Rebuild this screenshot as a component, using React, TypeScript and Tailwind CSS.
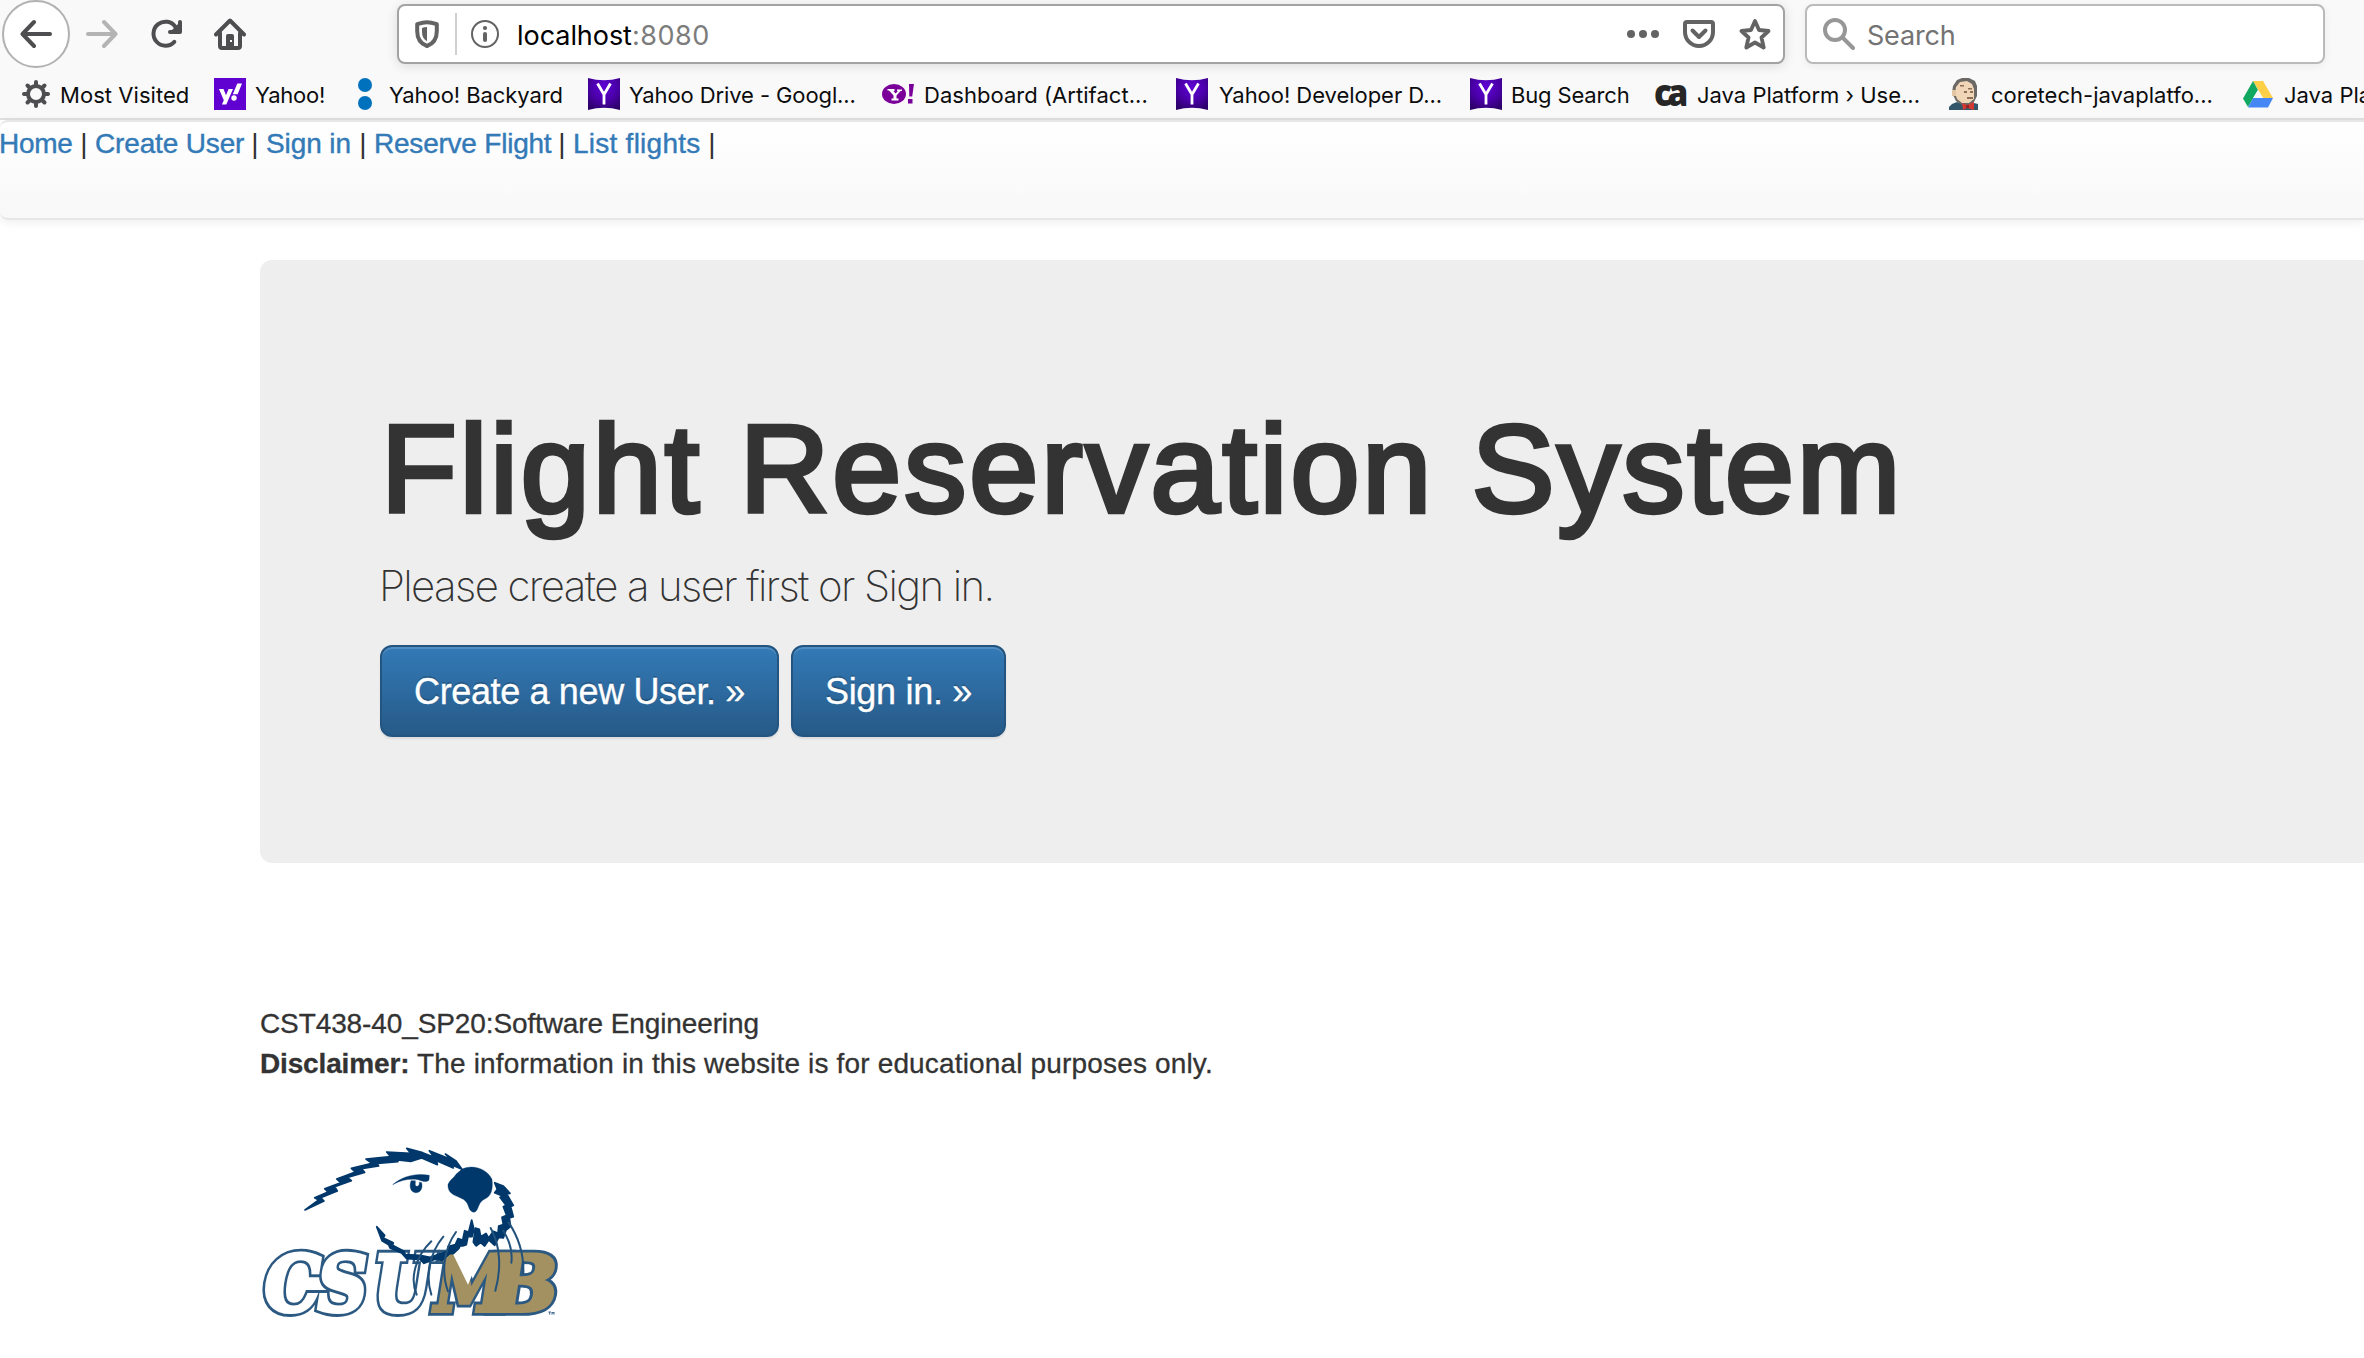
import React from "react";

/* ---------- toolbar icons ---------- */

function BackArrow() {
  return (
    <svg className="size-8" viewBox="0 0 32 32" fill="none" stroke="#4e4e50" strokeWidth="4" strokeLinecap="round" strokeLinejoin="round">
      <path d="M14 4 2.5 16 14 28M3 16h27" />
    </svg>
  );
}

function ForwardArrow() {
  return (
    <svg className="size-8" viewBox="0 0 32 32" fill="none" stroke="#b4b4b5" strokeWidth="4" strokeLinecap="round" strokeLinejoin="round">
      <path d="M18 4 29.5 16 18 28M29 16H2" />
    </svg>
  );
}

function Reload() {
  return (
    <svg className="size-8" viewBox="0 0 32 32" fill="none" stroke="#4e4e50" strokeWidth="4" strokeLinecap="round" strokeLinejoin="round">
      <path d="M24.3 23.8A12 12 0 1 1 25.6 9.2" />
      <path d="M30 4v10H20z" fill="#4e4e50" strokeWidth="0" />
      <path d="M30 4v10H20" />
    </svg>
  );
}

function Home() {
  return (
    <svg className="size-8" viewBox="0 0 32 32" fill="none" stroke="#4e4e50" strokeWidth="4" strokeLinecap="round" strokeLinejoin="round">
      <path d="M2 16.5 16 2.5l14 14" />
      <path d="M6 15v13a2 2 0 0 0 2 2h16a2 2 0 0 0 2-2V15" />
      <path d="M12 30V18a2 2 0 0 1 2-2h4a2 2 0 0 1 2 2v12z" fill="#4e4e50" stroke="none" />
      <rect x="16" y="22" width="2" height="2" fill="#f9f9fa" stroke="none" />
    </svg>
  );
}

function Shield() {
  return (
    <svg className="h-7 w-6" viewBox="0 0 24 28" fill="none">
      <path d="M12 2.2c3.200 0 6.200.8 9.800 2v7c0 8-3.500 12.500-9.800 14.800C5.700 23.700 2.200 19.200 2.200 11.200v-7c3.600-1.200 6.600-2 9.800-2z" stroke="#636364" strokeWidth="4" strokeLinejoin="round" />
      <path d="M12 7c-1.900 0-3.300.3-5 .9v4.100c0 4.400 1.500 7.200 5 9.300z" fill="#636364" />
    </svg>
  );
}

function Info() {
  return (
    <svg className="size-7" viewBox="0 0 28 28" fill="none">
      <circle cx="14" cy="14" r="13" stroke="#636364" strokeWidth="2" />
      <circle cx="14" cy="8" r="2.100" fill="#636364" />
      <rect x="12" y="12" width="4" height="10" rx="2" fill="#636364" />
    </svg>
  );
}

function Dots() {
  return (
    <svg className="size-8" viewBox="0 0 32 32" fill="#636364">
      <circle cx="4" cy="16" r="4" />
      <circle cx="16" cy="16" r="4" />
      <circle cx="28" cy="16" r="4" />
    </svg>
  );
}

function Pocket() {
  return (
    <svg className="size-8" viewBox="0 0 32 32" fill="none" stroke="#636364" strokeWidth="4" strokeLinecap="round" strokeLinejoin="round">
      <path d="M4 4h24a2 2 0 0 1 2 2v8a14 14 0 0 1-28 0V6a2 2 0 0 1 2-2z" />
      <path d="m9.500 12.500 6.500 6.500 6.500-6.500" />
    </svg>
  );
}

function Star() {
  return (
    <svg className="size-8" viewBox="0 0 32 32" fill="none" stroke="#636364" strokeWidth="3.800" strokeLinejoin="round">
      <path d="m16 3 4 9 9.500 1-7 6.500 2.200 10L16 24.500 7.300 29.500l2.200-10-7-6.500 9.500-1z" />
    </svg>
  );
}

function Magnifier() {
  return (
    <svg className="size-8" viewBox="0 0 32 32" fill="none" stroke="#979798" strokeWidth="4" strokeLinecap="round">
      <circle cx="12" cy="12" r="10" />
      <path d="m19.500 19.500 10.500 10.500" />
    </svg>
  );
}

/* ---------- bookmark favicons ---------- */

function Gear() {
  return (
    <svg className="size-7" viewBox="0 0 28 28" fill="none" stroke="#4e4e50" strokeLinecap="round">
      <circle cx="14" cy="14" r="8" strokeWidth="4" />
      <path strokeWidth="4" d="M14 2v3M14 23v3M2 14h3M23 14h3M5.500 5.500l2 2M20.500 20.500l2 2M5.500 22.500l2-2M20.500 7.500l2-2" />
    </svg>
  );
}

function YahooSquare() {
  return (
    <svg className="size-8" viewBox="0 0 32 32">
      <rect width="32" height="32" fill="#6001d2" />
      <path d="M5 11h4.500l2.500 6.300 2.600-6.300H19l-6.700 15.500H7.900l1.900-4.300z" fill="#fff" />
      <path d="M23.300 5.500H28L23.600 16.300h-4.800z" fill="#fff" />
      <circle cx="20" cy="20" r="2.700" fill="#fff" />
    </svg>
  );
}

function BlueDots() {
  return (
    <svg className="size-8" viewBox="0 0 32 32" fill="#0071bc">
      <circle cx="17" cy="7" r="7" />
      <circle cx="17" cy="25" r="7" />
    </svg>
  );
}

function PurpleY() {
  return (
    <svg className="size-8" viewBox="0 0 32 32">
      <defs>
        <radialGradient id="purple" cx="0.5" cy="0.3" r="0.75">
          <stop offset="0" stopColor="#5f02d6" />
          <stop offset="0.55" stopColor="#4a00a8" />
          <stop offset="1" stopColor="#2c0068" />
        </radialGradient>
      </defs>
      <path d="M0 0q16 4.500 32 0v32q-16-4.500-32 0z" fill="url(#purple)" />
      <path d="m9.500 5.500 6.500 11 6.500-11M16 16v10.500" fill="none" stroke="#fff" strokeWidth="2.800" />
    </svg>
  );
}

function YahooBang() {
  return (
    <svg className="size-8" viewBox="0 0 32 32">
      <ellipse cx="12" cy="16" rx="12" ry="10" fill="#7b0099" />
      <path d="M5.500 11h7v2h-1l2 2.500 2.500-2.500h-1v-1.500h5v1.500h-1.500l-4 4.500v3h2v2h-7v-2h2v-3l-4.500-5H5.500z" fill="#fff" />
      <path d="M27 6h5l-1.800 12.500H27.300z" fill="#7b0099" />
      <rect x="26" y="21" width="4.500" height="4.500" fill="#7b0099" />
    </svg>
  );
}

function CaLogo() {
  return (
    <span className="-mt-1 block w-8 origin-left scale-x-90 font-['Open_Sans'] text-[37px] leading-8 font-extrabold tracking-[-5px] text-[#262626]">
      ca
    </span>
  );
}

function Butler() {
  return (
    <svg className="size-8" viewBox="0 0 32 32">
      <path d="M1 32v-3l3-3 5-2 8 3 9-2 4 1v6z" fill="#33566b" />
      <path d="M5 8 9 2l5-2h7l6 3 2 5v10l-3 6-4 3h-8l-6-4-4-8z" fill="#6b6866" />
      <path d="M8 9 12 4l7-1 5 3 2 5v10l-5 4h-7l-5-4-2-6z" fill="#f0d6b7" />
      <path d="M4 12h4v6H4z" fill="#e2c5a2" />
      <path d="M12 7h4v1.500h-4zM16 13h3v2h-3zM22 13h3v2h-3zM19 19h6v2h-6zM20 10h4v1.500h-4z" fill="#8d6e58" />
      <path d="m14 25 5 2 7-3v8l-7-2-4 2z" fill="#d33833" />
      <path d="M18 27h3v3h-3z" fill="#8f2623" />
    </svg>
  );
}

function Drive() {
  return (
    <svg className="size-8" viewBox="0 0 32 32">
      <path d="M11 3h10l10 17H21z" fill="#ffcf48" />
      <path d="M11 3 1 20.500 6 29l10-17z" fill="#11a861" />
      <path d="M11 20h20l-5 9.500H6z" fill="#4587f4" />
      <path d="m16 12 5 8H11z" fill="#f9f9fa" />
    </svg>
  );
}

/* ---------- campus logo ---------- */

const letters = [
  { ch: "C", x: 60, sx: 0.92, fill: "#ffffff" },
  { ch: "S", x: 219, sx: 0.9, fill: "#ffffff" },
  { ch: "U", x: 388, sx: 0.86, fill: "#ffffff" },
  { ch: "M", x: 570, sx: 0.88, fill: "#a39161" },
  { ch: "B", x: 736, sx: 1.05, fill: "#a39161" },
];

function OtterLogo() {
  return (
    <svg className="h-[174px] w-[300px] overflow-visible" viewBox="60 50 900 522">
      {/* outline pass, then fill pass, so that M and B join */}
      <g fontFamily="DejaVu Serif" fontWeight="700" fontSize="232" strokeWidth="29" stroke="#2b5982" fill="#2b5982" aria-hidden="true">
        {letters.map((l) => (
          <text key={l.ch} transform={`translate(${l.x} 544) skewX(-9) scale(${l.sx} 1)`}>
            {l.ch}
          </text>
        ))}
      </g>
      <g fontFamily="DejaVu Serif" fontWeight="700" fontSize="232" strokeWidth="12">
        {letters.map((l) => (
          <text key={l.ch} transform={`translate(${l.x} 544) skewX(-9) scale(${l.sx} 1)`} fill={l.fill} stroke={l.fill}>
            {l.ch}
          </text>
        ))}
      </g>
      <g fill="#00386b" stroke="#00386b" strokeWidth="5" strokeLinejoin="round">
        <path d="M195 242 236 212 224 205 264 188 254 178 302 160 290 149 346 128 334 117 396 102 378 89 452 82 440 68 512 72 500 57 548 70 582 84 568 64 632 90 616 74 648 95 666 120 634 106 640 116 590 94 592 106 545 86 512 96 460 90 474 97 412 102 416 110 364 118 374 129 322 144 334 154 284 172 292 185 242 205 252 215z" />
        <path d="M458 166C488 140 530 130 568 138L567 152C560 160 548 156 535 151 508 147 484 152 458 166z" strokeWidth="1" />
        <path d="M513 154C506 175 514 190 528 190 542 190 549 176 545 160L538 158C540 170 530 174 526 168L526 154z" strokeWidth="1" />
        <path d="M665 120C700 103 742 120 756 150 760 182 752 200 738 207 720 216 718 226 712 240 706 253 694 250 688 238 682 220 678 212 660 205 640 197 622 190 624 165 632 150 641 146 648 135z" strokeWidth="1" />
        <path d="M764 160 790 170 810 192 800 194 820 228 812 232 820 262 808 266 812 292 798 302 790 326 776 324 764 348 746 332 734 350 722 340 708 350 700 338 706 296 718 300 722 322 738 312 746 326 760 306 774 312 776 290 790 286 786 264 800 258 790 232 798 228 780 204 788 200 764 190 772 180z" />
        <path d="M410 292 434 318 430 326 460 340 458 348 492 366 496 376 540 378 570 384 622 366 624 352 646 346 654 328 668 332 674 304 686 308 695 272 702 300 696 322 684 322 678 350 660 350 650 374 630 372 606 394 590 388 552 402 540 390 500 388 486 372 450 356 446 346 426 334z" />
      </g>
      <path d="M640 376 662 356 690 344 716 356 726 368 684 466z" fill="#ffffff" />
      <g fill="none" stroke="#23527c" strokeWidth="6" strokeLinecap="round">
        <path d="M574 336C528 380 508 446 530 496" />
        <path d="M610 322C568 372 556 440 574 496" />
        <path d="M648 308C610 360 604 432 624 486" />
        <path d="M752 296C782 350 784 420 766 484" />
        <path d="M790 304C812 340 818 370 814 400" />
        <path d="M806 280C840 330 852 380 850 434" />
      </g>
      <path d="M925 548h8m-4 0v8m7 0v-8l3 4 3-4v8" fill="none" stroke="#23527c" strokeWidth="2.500" />
    </svg>
  );
}

/* ---------- page ---------- */

const bookmarks = [
  { label: "Yahoo!", icon: <YahooSquare />, box: "w-[134px]", text: "tracking-[-0.24px]" },
  { label: "Yahoo! Backyard", icon: <BlueDots />, box: "w-[240px]", text: "tracking-[-0.07px]" },
  { label: "Yahoo Drive - Googl...", icon: <PurpleY />, box: "w-[294px]", text: "tracking-[-0.1px]" },
  { label: "Dashboard (Artifact...", icon: <YahooBang />, box: "w-[294px]", text: "pl-px tracking-[0.04px]" },
  { label: "Yahoo! Developer D...", icon: <PurpleY />, box: "w-[294px]", text: "pl-[2px] tracking-[-0.04px]" },
  { label: "Bug Search", icon: <PurpleY />, box: "w-[184px]", text: "tracking-[-0.15px]" },
  { label: "Java Platform › Use...", icon: <CaLogo />, box: "w-[294px]", text: "pl-[2px] tracking-normal" },
  { label: "coretech-javaplatfo...", icon: <Butler />, box: "w-[294px]", text: "pl-[2px] tracking-[0.02px]" },
  { label: "Java Platform", icon: <Drive />, box: "w-[294px]", text: "pl-px tracking-normal" },
];

const links = [
  { label: "Home", cls: "w-[74px] tracking-[-0.3px] -ml-px" },
  { label: "Create User", cls: "w-[149px] tracking-[-0.15px]" },
  { label: "Sign in", cls: "w-[86px] tracking-[-0.1px]" },
  { label: "Reserve Flight", cls: "w-[177px] tracking-[-0.22px]" },
  { label: "List flights", cls: "w-[128px] tracking-[0.25px]" },
];

function BrowserChrome() {
  return (
    <header className="h-[118px] bg-[#f9f9fa] font-['Inter',sans-serif]">
      <div className="flex h-[68px] items-center pl-[2px]">
        <button className="flex size-[68px] items-center justify-center rounded-full border-2 border-[#b1b1b1] bg-white">
          <BackArrow />
        </button>
        <div className="ml-4"><ForwardArrow /></div>
        <div className="ml-8"><Reload /></div>
        <div className="ml-8"><Home /></div>
        <div className="ml-[151px] flex h-[60px] w-[1388px] items-center rounded-lg border-2 border-[#a3a3a3] bg-white pl-4 pr-3 shadow-[0_2px_12px_rgba(0,0,0,0.12)]">
          <Shield />
          <div className="ml-4 h-[42px] w-[2px] bg-[#d0d0d0]" />
          <div className="ml-[14px]"><Info /></div>
          <div className="ml-[18px] pt-[3px] text-[27px] text-black">
            <span className="tracking-[-0.05px]">localhost</span>
            <span className="tracking-[0.5px] text-[#7c7c7c]">:8080</span>
          </div>
          <div className="ml-auto flex items-center gap-6">
            <Dots />
            <Pocket />
            <Star />
          </div>
        </div>
        <div className="ml-5 flex h-[60px] w-[520px] items-center rounded-lg border-2 border-[#bababa] bg-white pl-4 shadow-[0_2px_8px_rgba(0,0,0,0.06)]">
          <Magnifier />
          <span className="ml-3 pt-[3px] text-[27px] tracking-[-0.2px] text-[#737373]">Search</span>
        </div>
      </div>
      <div className="flex h-[50px] items-center overflow-hidden bg-[#f9f9fa] pl-[22px] pt-px text-[22px] whitespace-nowrap text-[#0c0c0d]">
        <div className="flex w-[192px] shrink-0 items-center">
          <Gear />
          <span className="ml-[10px] pt-[3px] tracking-[0.05px]">Most Visited</span>
        </div>
        {bookmarks.map((b) => (
          <div key={b.label} className={`flex shrink-0 items-center ${b.box}`}>
            {b.icon}
            <span className={`ml-[9px] pt-[3px] ${b.text}`}>{b.label}</span>
          </div>
        ))}
      </div>
    </header>
  );
}

export default function App() {
  return (
    <div className="h-[1358px] w-[2364px] overflow-hidden bg-white font-['Liberation_Sans',Arial,sans-serif] text-[28px] leading-[40px] text-[#333333]">
      <BrowserChrome />
      <div className="h-[2px] bg-[#e0e0e0]" />
      <nav className="h-[100px] rounded-l-lg border-y-2 border-[#e7e7e7] bg-gradient-to-b from-white to-[#f8f8f8] shadow-[0_2px_10px_rgba(0,0,0,0.075)]">
        <div className="flex pt-[2px] whitespace-nowrap">
          {links.map((l) => (
            <React.Fragment key={l.label}>
              <a className={`shrink-0 text-[#337ab7] [-webkit-text-stroke:0.4px_#337ab7] ${l.cls}`}>{l.label}</a>
              <span className="w-[22px] shrink-0 text-center">|</span>
            </React.Fragment>
          ))}
        </div>
      </nav>

      <main className="ml-[260px] mt-10">
        <section className="h-[603px] rounded-l-xl bg-[#eeeeee] pl-[120px] pt-[140px]">
          <h1 className="h-[138px] pl-px text-[124px] leading-[138px] tracking-[3px] whitespace-nowrap [-webkit-text-stroke:4.5px_#333333]">
            Flight Reservation System
          </h1>
          <p className="mt-[18px] -ml-px h-[60px] font-['Inter'] text-[42px] leading-[60px] font-extralight tracking-[-1.62px]">
            Please create a user first or Sign in.
          </p>
          <div className="mt-[29px] flex gap-3 text-[36px] text-white [text-shadow:0_-2px_0_rgba(0,0,0,0.2)] [-webkit-text-stroke:0.3px_white]">
            <a className="flex h-[92px] w-[399px] items-center justify-center rounded-xl border-2 border-[#245580] bg-gradient-to-b from-[#337ab7] to-[#265a88] pt-[2px] tracking-[-0.36px] shadow-[inset_0_2px_0_rgba(255,255,255,0.15),0_2px_2px_rgba(0,0,0,0.075)]">
              Create a new User. »
            </a>
            <a className="flex h-[92px] w-[215px] items-center justify-center rounded-xl border-2 border-[#245580] bg-gradient-to-b from-[#337ab7] to-[#265a88] pt-[2px] tracking-[-0.3px] shadow-[inset_0_2px_0_rgba(255,255,255,0.15),0_2px_2px_rgba(0,0,0,0.075)]">
              Sign in. »
            </a>
          </div>
        </section>

        <footer className="pt-[141px] [-webkit-text-stroke:0.3px_#333333]">
          <p className="tracking-[-0.11px]">CST438-40_SP20:Software Engineering</p>
          <p className="flex">
            <b className="w-[157px] tracking-[-0.15px]">Disclaimer:</b>
            <span className="tracking-[0.16px]">The information in this website is for educational purposes only.</span>
          </p>
          <div className="mt-[62px] [-webkit-text-stroke:initial]">
            <OtterLogo />
          </div>
        </footer>
      </main>
    </div>
  );
}
